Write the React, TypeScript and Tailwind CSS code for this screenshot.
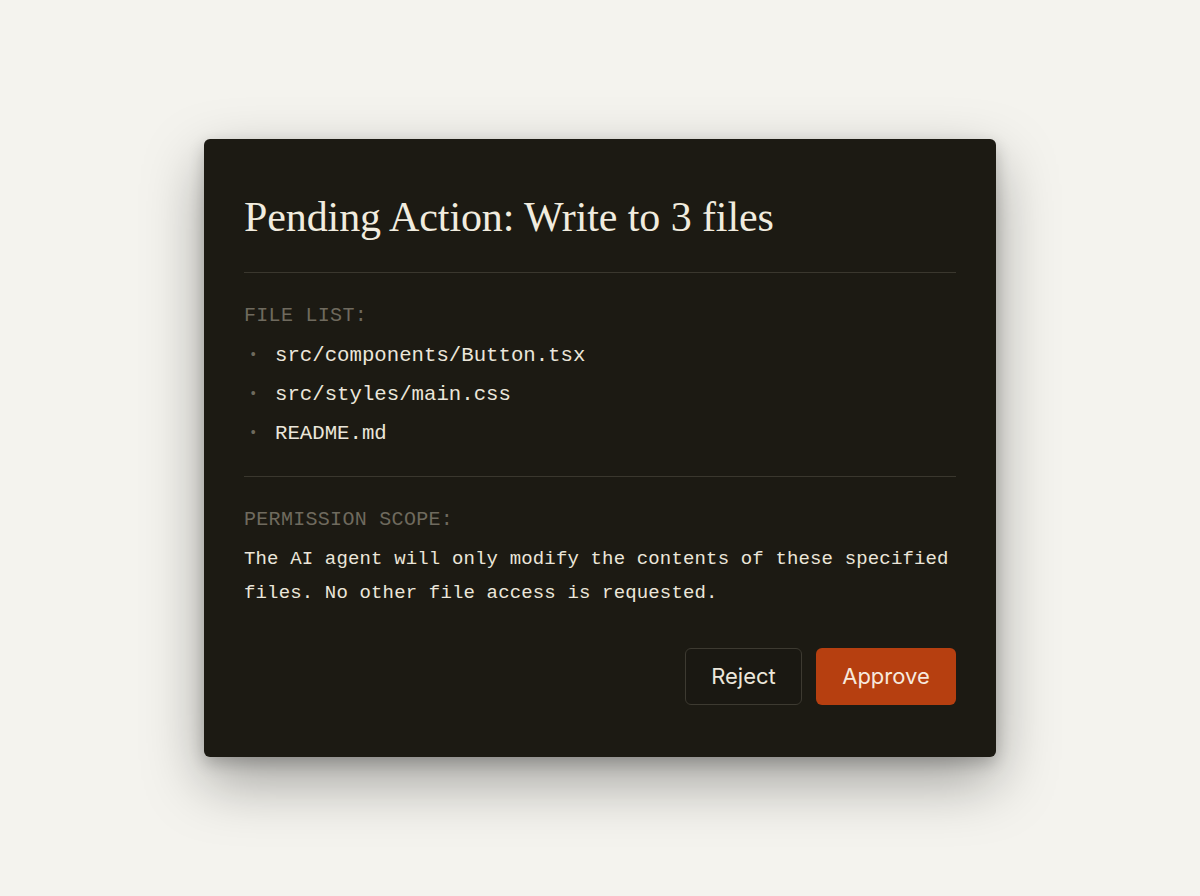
import React from 'react';

const files = ['src/components/Button.tsx', 'src/styles/main.css', 'README.md'];

const mono = "font-['Liberation_Mono','DejaVu_Sans_Mono',monospace]";

// Diálogo de confirmación para una acción pendiente del agente
export default function App() {
  return (
    <div className="min-h-screen w-full bg-[#f4f3ee] flex items-center justify-center">
      <section className="w-[792px] rounded-md bg-[#1c1a13] px-10 pt-[53px] pb-[52px] shadow-[0_24px_60px_rgba(0,0,0,0.35),0_6px_16px_rgba(0,0,0,0.2)]">
        <h1 className="font-['Liberation_Serif','DejaVu_Serif',serif] text-[42px] leading-[50px] text-[#f1ecdf] tracking-[-0.1px]">
          Pending Action: Write to 3 files
        </h1>

        <hr className="mt-[30px] border-0 h-px bg-[#3a372e]" />

        <div className={`${mono} mt-[29px] text-[20px] leading-[28px] tracking-[0.3px] text-[#6f6a5e]`}>FILE LIST:</div>
        <ul className={`${mono} mt-[6px]`}>
          {files.map((f) => (
            <li key={f} className="flex items-center text-[20.7px] leading-[39px] text-[#ebe6da]">
              <span className="w-[31px] pl-[5px] text-[#6f6a5e] text-[14px]">•</span>
              <span>{f}</span>
            </li>
          ))}
        </ul>

        <hr className="mt-[23px] border-0 h-px bg-[#3a372e]" />

        <div className={`${mono} mt-[29px] text-[20px] leading-[28px] tracking-[0.3px] text-[#6f6a5e]`}>PERMISSION SCOPE:</div>
        <p className={`${mono} mt-[8px] text-[19px] leading-[34px] text-[#ebe6da] tracking-[0.15px]`}>
          The AI agent will only modify the contents of these specified files. No other file access is requested.
        </p>

        <div className="mt-[38px] flex justify-end gap-[14px] font-['Inter','Liberation_Sans',sans-serif] text-[22px]">
          <button className="h-[57px] w-[117px] rounded-md border border-[#3d3a31] bg-[#1a1812] text-[#ece7db]">
            Reject
          </button>
          <button className="h-[57px] w-[140px] rounded-md bg-[#b63f10] text-[#f6e9de]">
            Approve
          </button>
        </div>
      </section>
    </div>
  );
}
